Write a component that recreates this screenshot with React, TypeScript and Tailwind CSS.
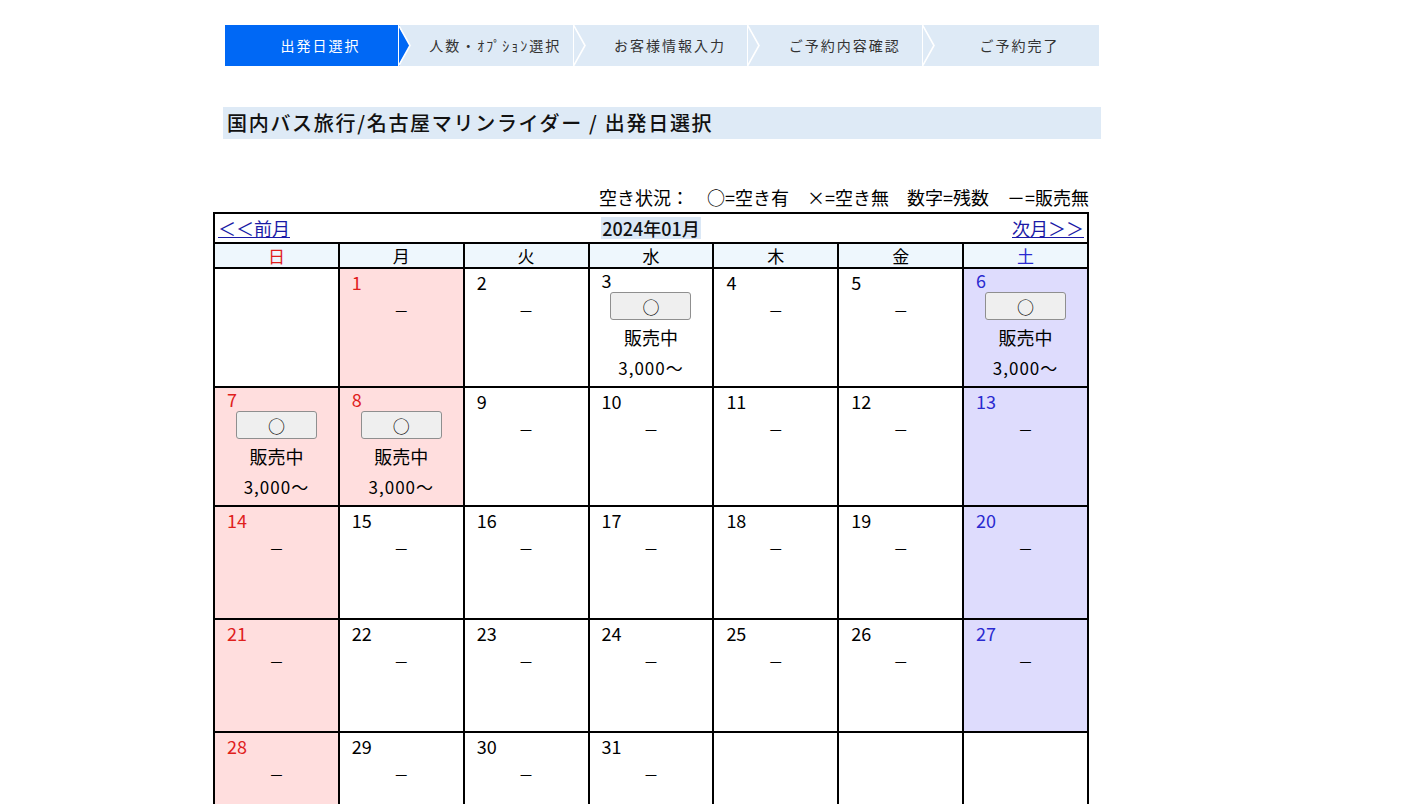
import React from 'react';

const font = { fontFamily: '"Noto Sans CJK JP", "Noto Sans", sans-serif' };

const steps = ['出発日選択', '人数・ｵﾌﾟｼｮﾝ選択', 'お客様情報入力', 'ご予約内容確認', 'ご予約完了'];

type Day = { d?: number; open?: boolean; holiday?: boolean };

const weeks: Day[][] = [
  [{}, { d: 1, holiday: true }, { d: 2 }, { d: 3, open: true }, { d: 4 }, { d: 5 }, { d: 6, open: true }],
  [{ d: 7, open: true }, { d: 8, open: true, holiday: true }, { d: 9 }, { d: 10 }, { d: 11 }, { d: 12 }, { d: 13 }],
  [{ d: 14 }, { d: 15 }, { d: 16 }, { d: 17 }, { d: 18 }, { d: 19 }, { d: 20 }],
  [{ d: 21 }, { d: 22 }, { d: 23 }, { d: 24 }, { d: 25 }, { d: 26 }, { d: 27 }],
  [{ d: 28 }, { d: 29 }, { d: 30 }, { d: 31 }, {}, {}, {}],
];

const rowHeights = ['h-[119px]', 'h-[119px]', 'h-[113px]', 'h-[113px]', 'h-[113px]'];

const weekdays = ['日', '月', '火', '水', '木', '金', '土'];

const Chevron = ({ active }: { active: boolean }) => (
  <svg className="absolute top-0 -right-[12px] z-10" width="14" height="41" viewBox="0 0 14 41">
    {active && <polygon points="0,0 12,20.5 0,41" fill="#0068f5" />}
    <polyline points="0.5,0 12,20.5 0.5,41" fill="none" stroke="#ffffff" strokeWidth="1.6" />
    <line x1="0.5" y1="0" x2="0.5" y2="41" stroke="#ffffff" strokeWidth="1" />
  </svg>
);

const Cell = ({ day, col }: { day: Day; col: number }) => {
  const sunday = col === 0;
  const saturday = col === 6;
  let bg = 'bg-white';
  if (day.d) {
    if (sunday || day.holiday) bg = 'bg-[#ffdede]';
    else if (saturday) bg = 'bg-[#dedcfd]';
  }
  const numColor = sunday || day.holiday ? 'text-[#e0201c]' : saturday ? 'text-[#2a2ad0]' : 'text-black';
  return (
    <td className={`border-2 border-black align-top p-0 ${bg}`}>
      {day.d && (
        <div className="flex flex-col h-full">
          <div className={`pl-[12px] text-[18px] leading-[20px] ${day.open ? 'pt-[1px]' : 'pt-[3px]'} ${numColor}`}>{day.d}</div>
          {day.open ? (
            <div className="flex flex-col items-center">
              <button className="mt-[2px] w-[81px] h-[28px] bg-[#efefef] border border-[#8f8f8f] rounded-[3px] text-[17px] leading-none text-black">○</button>
              <div className="mt-[6px] text-[18px] leading-[22px] text-black">販売中</div>
              <div className="mt-[10px] text-[17px] leading-[20px] tracking-[1px] text-black">3,000～</div>
            </div>
          ) : (
            <div className="text-center text-[15px] leading-[20px] mt-[9px] text-black">－</div>
          )}
        </div>
      )}
    </td>
  );
};

export default function App() {
  return (
    <div className="w-full min-h-screen bg-white" style={font}>
      <div className="ml-[213px] w-[890px] pt-[25px]">
        <div className="ml-[12px] w-[874px] h-[41px] flex">
          {steps.map((s, i) => (
            <div
              key={s}
              className={`relative flex-1 flex items-center justify-center pl-[16px] text-[14px] tracking-[2px] ${
                i === 0 ? 'bg-[#0068f5] text-white' : 'bg-[#deeaf6] text-[#333333]'
              }`}
            >
              <span>{s}</span>
              {i < steps.length - 1 && <Chevron active={i === 0} />}
            </div>
          ))}
        </div>

        <div className="mt-[41px] ml-[10px] w-[878px] h-[32px] bg-[#deeaf6] flex items-center pl-[4px]">
          <span className="text-[20px] font-medium text-[#111111] tracking-[1.7px] whitespace-pre">国内バス旅行/名古屋マリンライダー / 出発日選択</span>
        </div>

        <div className="mt-[47px] w-[876px] text-right text-[18px] leading-[22px] text-black whitespace-pre">
          {'空き状況：　○=空き有　×=空き無　数字=残数　－=販売無'}
        </div>

        <table className="border-collapse w-[876px] table-fixed border-2 border-black mt-[4px]">
          <tbody>
            <tr className="h-[30px]">
              <td colSpan={7} className="border-2 border-black p-0">
                <div className="flex items-center justify-between px-[3px] text-[18px] leading-[22px]">
                  <a href="#" className="text-[#1a1aa6] underline w-[100px]">＜＜前月</a>
                  <span className="bg-[#dbe8f6] font-medium text-[#111111] px-[1px]">2024年01月</span>
                  <a href="#" className="text-[#1a1aa6] underline w-[100px] text-right">次月＞＞</a>
                </div>
              </td>
            </tr>
            <tr className="h-[25px] bg-[#eef7fd]">
              {weekdays.map((w, i) => (
                <td
                  key={w}
                  className={`border-2 border-black p-0 text-center text-[17px] leading-[20px] ${
                    i === 0 ? 'text-[#e0201c]' : i === 6 ? 'text-[#2a2ad0]' : 'text-black'
                  }`}
                >
                  {w}
                </td>
              ))}
            </tr>
            {weeks.map((wk, r) => (
              <tr key={r} className={rowHeights[r]}>
                {wk.map((day, c) => (
                  <Cell key={c} day={day} col={c} />
                ))}
              </tr>
            ))}
          </tbody>
        </table>
      </div>
    </div>
  );
}
